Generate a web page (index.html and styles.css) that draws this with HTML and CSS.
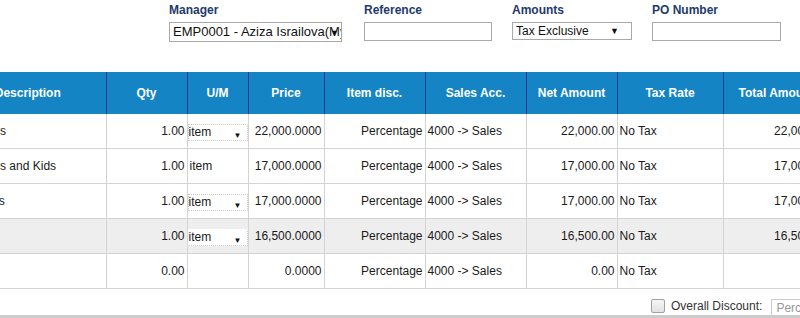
FILE: index.html
```html
<!DOCTYPE html>
<html lang="en">
<head>
    <meta charset="UTF-8">
    <title>Sales Invoice</title>
    <link rel="stylesheet" href="styles.css">
</head>
<body>
    <div class="header-fields">
        <div class="field field-manager">
            <label>Manager</label>
            <div class="select"><span class="value">EMP0001 - Aziza Israilova(Myster)</span><span class="arrow">&#9660;</span></div>
        </div>
        <div class="field field-ref">
            <label>Reference</label>
            <div class="input"></div>
        </div>
        <div class="field field-amounts">
            <label>Amounts</label>
            <div class="select"><span class="value">Tax Exclusive</span><span class="arrow">&#9660;</span></div>
        </div>
        <div class="field field-po">
            <label>PO Number</label>
            <div class="input"></div>
        </div>
    </div>

    <div class="lines">
        <table class="items">
            <colgroup>
                <col style="width:156px">
                <col style="width:81px">
                <col style="width:61px">
                <col style="width:76px">
                <col style="width:101px">
                <col style="width:101px">
                <col style="width:91px">
                <col style="width:106px">
                <col style="width:107px">
            </colgroup>
            <thead>
                <tr>
                    <th>Description</th>
                    <th>Qty</th>
                    <th>U/M</th>
                    <th>Price</th>
                    <th>Item disc.</th>
                    <th>Sales Acc.</th>
                    <th>Net Amount</th>
                    <th>Tax Rate</th>
                    <th>Total Amount</th>
                </tr>
            </thead>
            <tbody>
                <tr>
                    <td class="desc">Dresses</td>
                    <td class="num">1.00</td>
                    <td><div class="um">item<span class="arrow">&#9660;</span></div></td>
                    <td class="num">22,000.0000</td>
                    <td class="num">Percentage</td>
                    <td>4000 -&gt; Sales</td>
                    <td class="num">22,000.00</td>
                    <td>No Tax</td>
                    <td class="num">22,000.00</td>
                </tr>
                <tr>
                    <td class="desc">Hoodies and Kids</td>
                    <td class="num">1.00</td>
                    <td>item</td>
                    <td class="num">17,000.0000</td>
                    <td class="num">Percentage</td>
                    <td>4000 -&gt; Sales</td>
                    <td class="num">17,000.00</td>
                    <td>No Tax</td>
                    <td class="num">17,000.00</td>
                </tr>
                <tr>
                    <td class="desc">Blouses</td>
                    <td class="num">1.00</td>
                    <td><div class="um">item<span class="arrow">&#9660;</span></div></td>
                    <td class="num">17,000.0000</td>
                    <td class="num">Percentage</td>
                    <td>4000 -&gt; Sales</td>
                    <td class="num">17,000.00</td>
                    <td>No Tax</td>
                    <td class="num">17,000.00</td>
                </tr>
                <tr class="hover">
                    <td class="desc"></td>
                    <td class="num">1.00</td>
                    <td><div class="um white">item<span class="arrow">&#9660;</span></div></td>
                    <td class="num">16,500.0000</td>
                    <td class="num">Percentage</td>
                    <td>4000 -&gt; Sales</td>
                    <td class="num">16,500.00</td>
                    <td>No Tax</td>
                    <td class="num">16,500.00</td>
                </tr>
                <tr>
                    <td class="desc"></td>
                    <td class="num">0.00</td>
                    <td></td>
                    <td class="num">0.0000</td>
                    <td class="num">Percentage</td>
                    <td>4000 -&gt; Sales</td>
                    <td class="num">0.00</td>
                    <td>No Tax</td>
                    <td class="num"></td>
                </tr>
            </tbody>
        </table>
    </div>

    <div class="footer-bar">
        <span class="checkbox"></span>
        <span class="discount-label">Overall Discount:</span>
        <div class="discount-input">Percentage</div>
    </div>
</body>
</html>
```

FILE: styles.css
```css
body {
    margin: 0;
    width: 800px;
    height: 318px;
    overflow: hidden;
    background: #fff;
    font-family: "Liberation Sans", Arial, sans-serif;
    font-size: 12px;
    color: #222;
}
.header-fields {
    display: flex;
    padding-left: 168px;
    padding-top: 3px;
    height: 72px;
    box-sizing: border-box;
}
.field label {
    display: block;
    font-weight: bold;
    color: #1e3a6a;
    height: 19px;
    line-height: 14px;
}
.field-manager { width: 174px; margin-right: 22px; }
.field-ref { width: 128px; margin-right: 20px; }
.field-amounts { width: 120px; margin-right: 20px; }
.field-po { width: 129px; }
.field-manager .select,
.field-manager label { margin-left: 1px; }
.select,
.input {
    position: relative;
    box-sizing: border-box;
    border: 1px solid #a9a9a9;
    background: #fff;
    height: 19px;
    line-height: 17px;
    padding-left: 3px;
    white-space: nowrap;
    overflow: hidden;
    color: #111;
}
.select .value {
    display: block;
    overflow: hidden;
}
.field-manager .select {
    height: 20px;
    line-height: 18px;
    font-size: 13px;
    width: 173px;
    padding-right: 0;
}
.field-amounts .select {
    height: 18px;
    line-height: 16px;
}
.select .arrow {
    position: absolute;
    right: 4px;
    top: 0;
    font-size: 9px;
    color: #111;
}
.field-manager .select .arrow { right: 2px; top: 1px; }
.field-amounts .select .arrow { right: 12px; }

.lines {
    overflow: hidden;
}
.items {
    margin-left: -50px;
    border-collapse: collapse;
    table-layout: fixed;
    width: 880px;
}
.items th {
    background: #1484c4;
    color: #fff;
    font-weight: bold;
    height: 42px;
    padding: 0;
    border-left: 1px solid #1c3d8f;
    border-right: 1px solid #1c3d8f;
    text-align: center;
}
.items td {
    height: 34px;
    padding: 0 2px;
    border: 1px solid #d3d3d3;
    border-top: 0;
    white-space: nowrap;
    overflow: hidden;
    color: #1a1a1a;
}
.items th:first-child,
.items td:first-child { border-left: 0; }
.items td.num { text-align: right; }
.items td.desc { padding-left: 12px; }
.items tr.hover td { background: #eee; }
.um {
    position: relative;
    box-sizing: border-box;
    height: 17px;
    line-height: 14px;
    margin: 3px -2px 0 -2px;
    border: 1px dotted #ccc;
}
.um.white { background: #fff; border-color: #fff #ccc #ccc #fff; }
.um .arrow {
    position: absolute;
    right: 5px;
    top: 4px;
    font-size: 8px;
    color: #111;
}

.footer-bar {
    display: flex;
    align-items: center;
    padding-left: 651px;
    padding-top: 8px;
    height: 29px;
    border-bottom: 3px solid #ccc;
    box-sizing: border-box;
}
.checkbox {
    flex-shrink: 0;
    width: 12px;
    height: 12px;
    border: 1px solid #a0a0a0;
    border-radius: 2px;
    background: linear-gradient(#f6f6f6, #e2e2e2);
    margin-right: 6px;
}
.discount-label {
    flex-shrink: 0;
    white-space: nowrap;
    color: #333;
    margin-right: 9px;
}
.discount-input {
    flex-shrink: 0;
    align-self: flex-end;
    box-sizing: border-box;
    border: 1px solid #ccc;
    border-bottom: 0;
    height: 16px;
    line-height: 16px;
    padding-left: 4px;
    color: #999;
    width: 70px;
    white-space: nowrap;
    overflow: hidden;
}
```
